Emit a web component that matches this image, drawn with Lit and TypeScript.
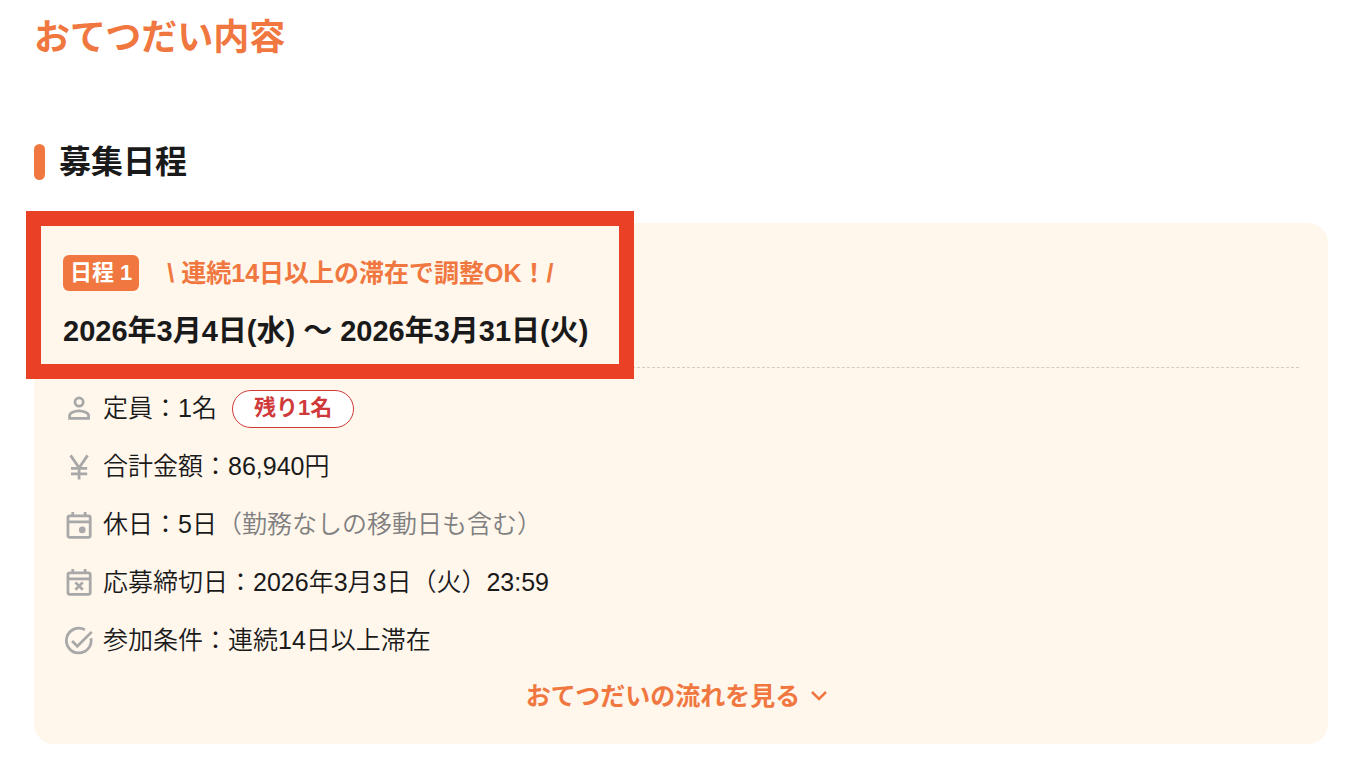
import { LitElement, html, css, svg, TemplateResult } from "lit";
import { customElement, state } from "lit/decorators.js";

const icons: Record<string, TemplateResult> = {
  person: svg`<circle cx="11.700" cy="6.600" r="3" /><path d="M11.700 13c-3.400 0-6.900 1.600-6.900 3.400v2h13.800v-2c0-1.800-3.500-3.400-6.900-3.400z" />`,
  yen: svg`<path d="M5.500 3.200L11.700 12.200l6.200-9M11.700 12v8.700M5.800 12.700h11.800M5.800 16.700h11.800" />`,
  dayOff: svg`<rect x="3.600" y="5" width="16.200" height="15.600" rx="1.300" /><path d="M3.600 9.300h16.200M7.100 2.200v3M16.100 2.200v3" /><circle class="solid" cx="14" cy="15.200" r="2.400" />`,
  deadline: svg`<rect x="3.600" y="4.300" width="16.200" height="15.600" rx="1.300" /><path d="M3.600 8.600h16.200M7.100 1.500v3M16.100 1.500v3M9 11.200l5.400 5.400M14.400 11.200l-5.400 5.400" />`,
  check: svg`<path d="M20.300 9.600A9 9 0 1 1 15.900 3.500M6.600 11.700l3.800 3.800L20.900 5" />`,
};

interface Detail {
  icon: string;
  label: string;
  value: string;
  note?: string;
  pill?: string;
}

const details: Detail[] = [
  { icon: "person", label: "定員", value: "1名", pill: "残り1名" },
  { icon: "yen", label: "合計金額", value: "86,940円" },
  { icon: "dayOff", label: "休日", value: "5日", note: "（勤務なしの移動日も含む）" },
  { icon: "deadline", label: "応募締切日", value: "2026年3月3日（火）23:59" },
  { icon: "check", label: "参加条件", value: "連続14日以上滞在" },
];

@customElement("app-root")
export class AppRoot extends LitElement {
  @state() private open = false;

  static styles = css`
    :host {
      display: block;
      box-sizing: border-box;
      padding: 12px 44px 30px 34px;
      background: #fff;
      color: #1a1a1a;
      font-family: "Liberation Sans", "Noto Sans CJK JP", sans-serif;
    }
    * {
      box-sizing: border-box;
    }
    h1,
    h2,
    p,
    ul {
      margin: 0;
      padding: 0;
    }
    .title {
      color: #f07840;
      font-size: 36px;
      line-height: 52px;
      font-weight: 700;
    }
    .section {
      display: flex;
      align-items: center;
      gap: 14px;
      margin: 74px 0 37px;
      font-size: 32px;
      line-height: 48px;
      font-weight: 700;
    }
    .bar {
      width: 11px;
      height: 36px;
      border-radius: 6px;
      background: #f07840;
    }
    .card {
      padding: 32px 29px 29px;
      border-radius: 20px;
      background: #fff6ec;
    }
    .head {
      position: relative;
      padding-bottom: 16px;
      border-bottom: 1px dashed #cfcfc4;
    }
    .focus {
      position: absolute;
      top: -44px;
      left: -37px;
      width: 608px;
      height: 168px;
      border: 15px solid #ea4026;
      pointer-events: none;
    }
    .plan {
      display: flex;
      align-items: center;
      gap: 28px;
      font-weight: 700;
    }
    .tag {
      padding: 0 7px;
      border-radius: 6px;
      background: #f07840;
      color: #fff;
      font-size: 22px;
      line-height: 36px;
    }
    .promo {
      color: #f07840;
      font-size: 25px;
      line-height: 36px;
    }
    .period {
      margin-top: 20px;
      font-size: 29px;
      line-height: 40px;
      font-weight: 700;
    }
    .details {
      display: grid;
      gap: 20px;
      margin-top: 22px;
      list-style: none;
    }
    .detail {
      display: flex;
      align-items: center;
      gap: 7px;
      font-size: 25px;
      font-weight: 350;
    }
    .text {
      padding-bottom: 2px;
      line-height: 36px;
    }
    .icon {
      flex: none;
      width: 33px;
      height: 33px;
      fill: none;
      stroke: #a8a8a8;
      stroke-width: 2;
    }
    .solid {
      fill: #a8a8a8;
      stroke: none;
    }
    .note {
      color: #808080;
    }
    .pill {
      margin-left: 8px;
      padding: 0 21px 2px;
      border: 1px solid #d0393a;
      border-radius: 19px;
      background: #fff;
      color: #d0393a;
      font-size: 22px;
      line-height: 34px;
      font-weight: 700;
    }
    .more {
      display: flex;
      align-items: center;
      gap: 10px;
      margin: 17px auto 0;
      padding: 0 8px 0 0;
      border: 0;
      background: none;
      color: #f07840;
      font: inherit;
      font-size: 25px;
      line-height: 38px;
      font-weight: 700;
      cursor: pointer;
    }
    .chevron {
      width: 18px;
      height: 12px;
      fill: none;
      stroke: currentColor;
      stroke-width: 2.5;
    }
  `;

  render() {
    return html`
      <h1 class="title">おてつだい内容</h1>
      <h2 class="section"><span class="bar"></span>募集日程</h2>
      <section class="card">
        <div class="head">
          <div class="plan">
            <span class="tag">日程 1</span>
            <span class="promo">\\ 連続14日以上の滞在で調整OK！/</span>
          </div>
          <p class="period">2026年3月4日(水) 〜 2026年3月31日(火)</p>
          <div class="focus"></div>
        </div>
        <ul class="details">
          ${details.map(
            (d) => html`<li class="detail">
              <svg class="icon" viewBox="0 0 24 24" aria-hidden="true">${icons[d.icon]}</svg>
              <span class="text">${d.label}：${d.value}${d.note ? html`<span class="note">${d.note}</span>` : ""}</span>
              ${d.pill ? html`<span class="pill">${d.pill}</span>` : ""}
            </li>`
          )}
        </ul>
        <button class="more" aria-expanded=${this.open} @click=${() => (this.open = !this.open)}>
          おてつだいの流れを見る
          <svg class="chevron" viewBox="0 0 18 12" aria-hidden="true"><path d="M2 2l7 7 7-7" /></svg>
        </button>
      </section>
    `;
  }
}
